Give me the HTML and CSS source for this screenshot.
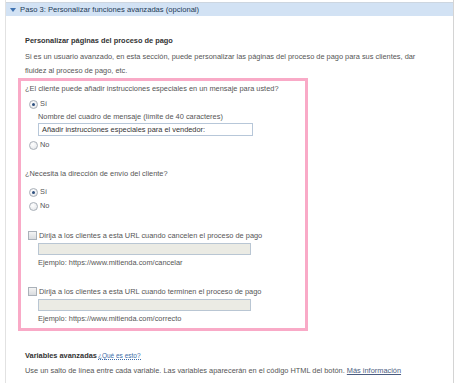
FILE: index.html
```html
<!DOCTYPE html>
<html lang="es">
<head>
    <meta charset="UTF-8">
    <title>Paso 3: Personalizar funciones avanzadas</title>
    <link rel="stylesheet" href="styles.css">
</head>
<body>
    <div class="panel">
        <div class="panel-head">
            <span class="arrow"></span>
            Paso 3: Personalizar funciones avanzadas (opcional)
        </div>

        <div class="panel-body">
            <h4 class="title">Personalizar páginas del proceso de pago</h4>
            <p class="intro">Si es un usuario avanzado, en esta sección, puede personalizar las páginas del proceso de pago para sus clientes, dar fluidez al proceso de pago, etc.</p>

            <div class="highlight">
                <p class="question">¿El cliente puede añadir instrucciones especiales en un mensaje para usted?</p>
                <div class="choice first"><span class="radio checked"></span>Sí</div>
                <div class="sub">
                    <div class="hint">Nombre del cuadro de mensaje (límite de 40 caracteres)</div>
                    <div class="field">Añadir instrucciones especiales para el vendedor:</div>
                </div>
                <div class="choice no"><span class="radio"></span>No</div>

                <p class="question q2">¿Necesita la dirección de envío del cliente?</p>
                <div class="choice gap"><span class="radio checked"></span>Sí</div>
                <div class="choice"><span class="radio"></span>No</div>

                <div class="check-row"><span class="box"></span>Dirija a los clientes a esta URL cuando cancelen el proceso de pago</div>
                <div class="sub">
                    <div class="field disabled"></div>
                    <div class="example">Ejemplo: https://www.mitienda.com/cancelar</div>
                </div>

                <div class="check-row"><span class="box"></span>Dirija a los clientes a esta URL cuando terminen el proceso de pago</div>
                <div class="sub">
                    <div class="field disabled"></div>
                    <div class="example">Ejemplo: https://www.mitienda.com/correcto</div>
                </div>
            </div>

            <h4 class="title vars">Variables avanzadas<a class="help" href="#">¿Qué es esto?</a></h4>
            <p class="note">Use un salto de línea entre cada variable. Las variables aparecerán en el código HTML del botón. <a href="#">Más información</a></p>
        </div>
    </div>
</body>
</html>
```

FILE: styles.css
```css
body {
    font-family: "Liberation Sans", Arial, sans-serif;
    font-size: 7.4px;
    color: #555;
    margin: 0;
    background-color: #fff;
}

.panel {
    margin-left: 5px;
    width: 447px;
    height: 383px;
    border-left: 1px solid #e2e2e2;
    border-right: 1px solid #d4d4d4;
    padding-top: 2px;
}

.panel-head {
    height: 13px;
    line-height: 13px;
    border-top: 1px solid #cdd6e0;
    background-color: #d2e2f4;
    color: #233b57;
    font-size: 7.6px;
    padding-left: 4px;
}

.arrow {
    display: inline-block;
    width: 0;
    height: 0;
    border-left: 3px solid transparent;
    border-right: 3px solid transparent;
    border-top: 4px solid #3f72b0;
    margin-right: 2px;
    vertical-align: 0;
}

.panel-body {
    padding-left: 12px;
}

.title {
    margin: 18px 0 0 7px;
    font-size: 7.4px;
    line-height: 14px;
    color: #333;
}

.intro {
    margin: 2px 0 0 7px;
    line-height: 14px;
    width: 400px;
}

.highlight {
    width: 280px;
    border: 3px solid #f9aac7;
    padding: 1px 0 3px 4px;
}

.question {
    margin: 0;
    line-height: 13px;
}

.question.q2 {
    margin-top: 15px;
}

.choice {
    display: flex;
    align-items: center;
    line-height: 14px;
    padding-left: 4px;
}

.choice.first {
    margin-top: 2px;
}

.choice.no {
    margin-top: 2px;
}

.choice.gap {
    margin-top: 5px;
}

.radio {
    width: 7px;
    height: 7px;
    border: 1px solid #a9b0b8;
    border-radius: 50%;
    background: radial-gradient(circle at 40% 35%, #fff 0, #e6e8eb 80%);
    margin-right: 2px;
    position: relative;
}

.radio.checked::after {
    content: "";
    position: absolute;
    left: 2px;
    top: 2px;
    width: 3px;
    height: 3px;
    border-radius: 50%;
    background-color: #2d4f7e;
}

.sub {
    padding-left: 13px;
}

.hint {
    line-height: 12px;
}

.field {
    width: 210px;
    height: 11px;
    line-height: 11px;
    border: 1px solid #b7c7d9;
    background-color: #fff;
    padding-left: 3px;
    color: #333;
}

.field.disabled {
    margin-top: 1px;
    width: 211px;
    height: 10px;
    padding-left: 0;
    background-color: #ebebe4;
    border-color: #b9c6d3;
}

.example {
    line-height: 13px;
    margin-top: 1px;
}

.check-row {
    display: flex;
    align-items: center;
    line-height: 13px;
    margin-top: 16px;
    padding-left: 3px;
}

.box {
    width: 7px;
    height: 7px;
    border: 1px solid #aab1b9;
    background: linear-gradient(#f4f4f4, #d9dcdf);
    margin-right: 2px;
}

.title.vars {
    margin-top: 18px;
    line-height: 13px;
}

.help {
    font-weight: normal;
    font-size: 6.5px;
    color: #3d6ca8;
    text-decoration: none;
    border-bottom: 1px dotted #3d6ca8;
    margin-left: 1px;
}

.note {
    margin: 2px 0 0 7px;
    line-height: 13px;
}

.note a {
    color: #4a5c80;
}
```
